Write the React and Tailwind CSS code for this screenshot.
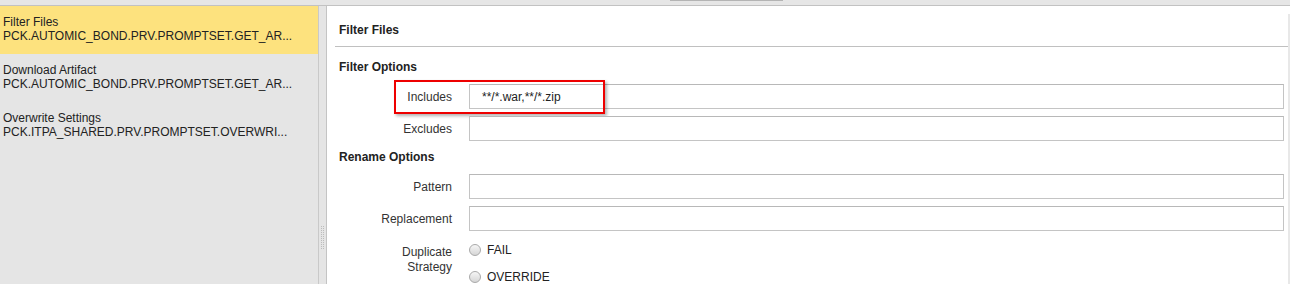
import React from 'react';

const items = [
  { title: 'Filter Files', sub: 'PCK.AUTOMIC_BOND.PRV.PROMPTSET.GET_AR...', active: true },
  { title: 'Download Artifact', sub: 'PCK.AUTOMIC_BOND.PRV.PROMPTSET.GET_AR...' },
  { title: 'Overwrite Settings', sub: 'PCK.ITPA_SHARED.PRV.PROMPTSET.OVERWRI...' },
];

const Field = ({ label, value, children }) => (
  <div className="relative flex items-center h-[25px]">
    <div className="w-[113px] text-right text-[#333]">{label}</div>
    <div className="ml-[17px] mr-[4px] flex-1 h-[25px] border border-[#c4c4c4] border-t-[#b8b8b8] bg-white pl-[12px] flex items-center text-[#222]">
      {value}
    </div>
    {children}
  </div>
);

const Radio = ({ label }) => (
  <div className="flex items-center h-[26px]">
    <span className="w-[12px] h-[12px] rounded-full border border-[#a9a9a9] bg-gradient-to-b from-[#f6f6f6] to-[#d6d6d6]" />
    <span className="ml-[6px] text-[#222]">{label}</span>
  </div>
);

const App = () => {
  return (
    <div
      className="w-[1290px] h-[284px] overflow-hidden flex flex-col bg-white text-[12px] leading-[14px]"
      style={{ fontFamily: '"Liberation Sans", Arial, sans-serif' }}
    >
      {/* top strip */}
      <div className="h-[6px] shrink-0 bg-[#e6e6e6] border-b border-[#c2c2c2]">
        <div className="ml-[670px] w-[113px] h-[1px] bg-[#b4b4b4]" />
      </div>

      <div className="flex flex-1 min-h-0">
        {/* left list */}
        <div className="w-[319px] shrink-0 bg-[#e5e5e5] border-r border-[#c9c9c9]">
          {items.map((it) => (
            <div
              key={it.title}
              className={`h-[48px] pl-[3px] pt-[9px] text-[#222] ${it.active ? 'bg-[#fde27e]' : ''}`}
            >
              <div className="h-[14px]">{it.title}</div>
              <div className="h-[14px]">{it.sub}</div>
            </div>
          ))}
        </div>

        {/* splitter */}
        <div className="w-[8px] shrink-0 bg-[#e5e5e5] border-r border-[#c4c4c4] flex flex-col">
          <div className="h-[220px]" />
          <svg width="7" height="24" viewBox="0 0 7 24" className="ml-[1px]">
            {Array.from({ length: 12 }).map((_, i) => (
              <g key={i} fill="#bcbcbc">
                <rect x="1" y={i * 2} width="1" height="1" />
                <rect x="3" y={i * 2} width="1" height="1" />
              </g>
            ))}
          </svg>
        </div>

        {/* content */}
        <div className="flex-1 flex min-w-0">
          <div className="flex-1 min-w-0">
            <div className="ml-[8px] pt-[17px] border-b border-[#c0c0c0] h-[41px]">
              <div className="pl-[4px] font-bold text-[#222]">Filter Files</div>
            </div>

            <div className="pl-[12px]">
              <div className="mt-[13px] font-bold text-[#222]">Filter Options</div>

              <div className="mt-[10px]">
                <Field label="Includes" value="**/*.war,**/*.zip">
                  <div className="absolute left-[55px] top-[-4px] w-[211px] h-[34px] border-2 border-[#ee0000] shadow-[2px_2px_3px_rgba(0,0,0,0.3)] pointer-events-none" />
                </Field>
              </div>
              <div className="mt-[7px]">
                <Field label="Excludes" />
              </div>

              <div className="mt-[9px] font-bold text-[#222]">Rename Options</div>

              <div className="mt-[10px]">
                <Field label="Pattern" />
              </div>
              <div className="mt-[7px]">
                <Field label="Replacement" />
              </div>

              <div className="mt-[13px] flex">
                <div className="w-[113px] text-right text-[#333] leading-[15px] pt-[1px]">
                  Duplicate
                  <br />
                  Strategy
                </div>
                <div className="ml-[17px] -mt-[7px] flex flex-col gap-[1px]">
                  <Radio label="FAIL" />
                  <Radio label="OVERRIDE" />
                </div>
              </div>
            </div>
          </div>
          <div className="w-[2px] shrink-0 mt-[8px] bg-[#e8e8e8]" />
        </div>
      </div>
    </div>
  );
};

export default App;
